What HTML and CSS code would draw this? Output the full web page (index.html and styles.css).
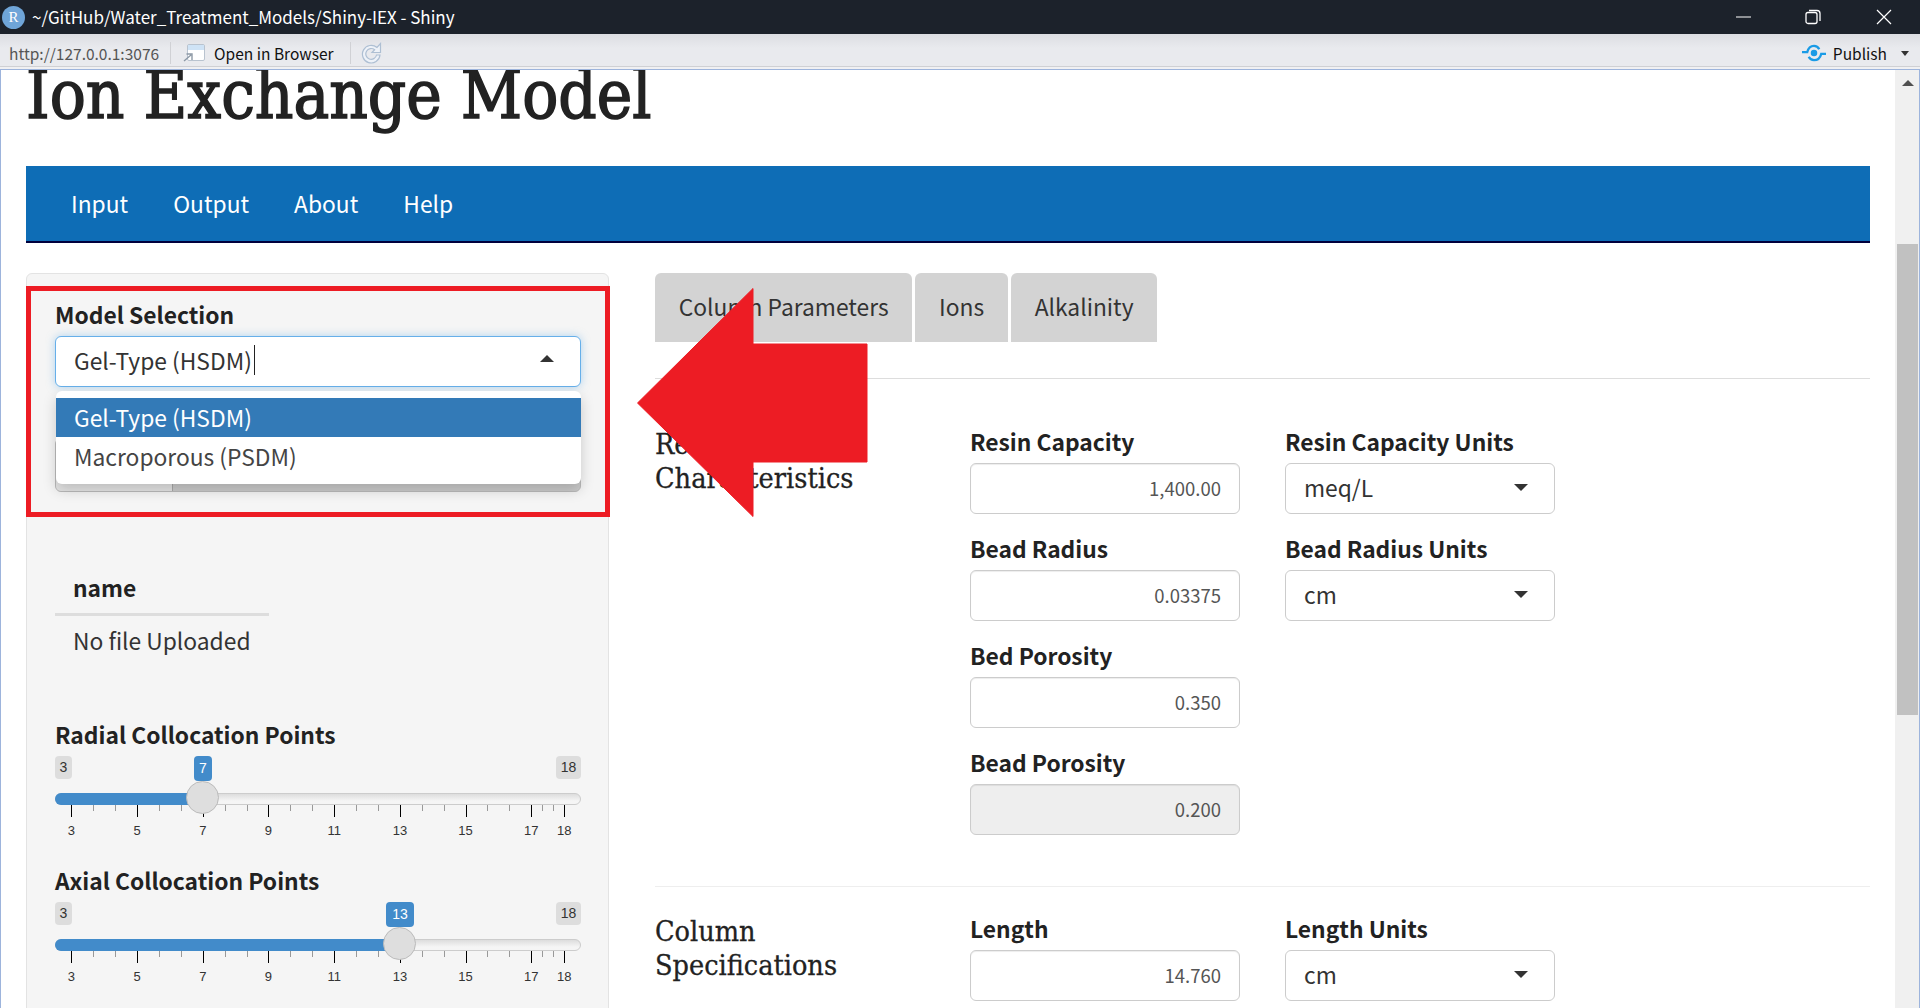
FILE: index.html
```html
<!DOCTYPE html>
<html lang="en">
<head>
<meta charset="utf-8">
<title>Shiny-IEX</title>
<link rel="stylesheet" href="styles.css">
</head>
<body>
<header class="titlebar">
  <span class="r-logo">R</span>
  <span class="title-text">~/GitHub/Water_Treatment_Models/Shiny-IEX - Shiny</span>
  <div class="win-btns">
    <svg class="win-icon" viewBox="0 0 16 16"><path d="M0 8h15" stroke="#fff" fill="none"/></svg>
    <svg class="win-icon" viewBox="0 0 16 16"><rect x="1" y="3.500" width="11" height="11" rx="2" stroke="#fff" fill="none" stroke-width="1.300"/><path d="M4 1.500h8a3 3 0 0 1 3 3v7.500" stroke="#fff" fill="none" stroke-width="1.300"/></svg>
    <svg class="win-icon" viewBox="0 0 16 16"><path d="M1 1l14 14M15 1L1 15" stroke="#fff" fill="none" stroke-width="1.200"/></svg>
  </div>
</header>
<div class="toolbar">
  <span class="url">http://127.0.0.1:3076</span>
  <span class="tool-sep"></span>
  <svg class="open-icon" viewBox="0 0 22 20"><rect x="4.500" y="1.500" width="17" height="16" rx="1.500" fill="#fff" stroke="#b9c3cf"/><rect x="5" y="2" width="16" height="5" fill="#cfe3f6"/><path d="M1 18l7-6M3.500 11H9v6" stroke="#8d99a6" fill="none" stroke-width="1.400"/></svg>
  <span class="open-text">Open in Browser</span>
  <span class="tool-sep sep-reload"></span>
  <svg class="reload-icon" viewBox="0 0 22 22"><path d="M17 5.500A8.800 8.800 0 1 0 20 13h-3.500a5.400 5.400 0 1 1-1.900-5.300L12 10.500h8.500V1.500z" fill="#eef2f8" stroke="#aebfd3" stroke-width="1.200"/></svg>
  <div class="publish">
    <svg class="publish-icon" viewBox="0 0 25 20"><circle cx="12.500" cy="10" r="3.400" fill="#1a9be6"/><path d="M0 9h5.500C6.500 5 9 2.500 12.500 2.500S17 4 18 6M25 11h-5c-1 4-4 6.500-7.500 6.500S8 16 7 14" fill="none" stroke="#1a9be6" stroke-width="2.400"/></svg>
    <span>Publish</span>
    <span class="caret-small"></span>
  </div>
</div>
<div class="viewport">
  <main class="page">
    <h1 class="app-title">Ion Exchange Model</h1>
    <nav class="navbar">
      <a>Input</a><a>Output</a><a>About</a><a>Help</a>
    </nav>
    <div class="layout">
      <aside class="sidebar">
        <div class="model-field">
          <label class="lbl">Model Selection</label>
          <div class="select">
            <span>Gel-Type (HSDM)</span><i class="cursor"></i>
            <span class="caret-up"></span>
          </div>
          <div class="under-dropdown"><span class="browse-stub"></span></div>
          <ul class="menu">
            <li class="active">Gel-Type (HSDM)</li>
            <li>Macroporous (PSDM)</li>
          </ul>
        </div>
        <table class="file-table">
          <thead><tr><th>name</th></tr></thead>
          <tbody><tr><td>No file Uploaded</td></tr></tbody>
        </table>
        <div class="slider radial">
          <label class="lbl">Radial Collocation Points</label>
          <div class="track-area">
            <span class="badge badge-min">3</span>
            <span class="badge badge-max">18</span>
            <span class="badge badge-val val-7">7</span>
            <div class="track"><div class="fill fill-7"></div></div>
            <div class="ticks"></div>
            <span class="knob knob-7"></span>
          </div>
        </div>
        <div class="slider">
          <label class="lbl">Axial Collocation Points</label>
          <div class="track-area">
            <span class="badge badge-min">3</span>
            <span class="badge badge-max">18</span>
            <span class="badge badge-val val-13">13</span>
            <div class="track"><div class="fill fill-13"></div></div>
            <div class="ticks"></div>
            <span class="knob knob-13"></span>
          </div>
        </div>
      </aside>
      <section class="content">
        <div class="tabs">
          <span class="tab">Column Parameters</span><span class="tab">Ions</span><span class="tab">Alkalinity</span>
        </div>
        <div class="row first-row">
          <h3 class="row-title">Resin<br>Characteristics</h3>
          <div class="grid">
            <div class="field"><label class="lbl">Resin Capacity</label><div class="num">1,400.00</div></div>
            <div class="field"><label class="lbl">Resin Capacity Units</label><div class="sel">meq/L<span class="caret-down"></span></div></div>
            <div class="field"><label class="lbl">Bead Radius</label><div class="num">0.03375</div></div>
            <div class="field"><label class="lbl">Bead Radius Units</label><div class="sel">cm<span class="caret-down"></span></div></div>
            <div class="field span"><label class="lbl">Bed Porosity</label><div class="num">0.350</div></div>
            <div class="field span"><label class="lbl">Bead Porosity</label><div class="num disabled">0.200</div></div>
          </div>
        </div>
        <div class="row second-row">
          <h3 class="row-title">Column<br>Specifications</h3>
          <div class="grid">
            <div class="field"><label class="lbl">Length</label><div class="num">14.760</div></div>
            <div class="field"><label class="lbl">Length Units</label><div class="sel">cm<span class="caret-down"></span></div></div>
          </div>
        </div>
      </section>
    </div>
    <div class="highlight"></div>
    <svg class="arrow" viewBox="0 0 232 231"><path d="M1.500 116L117 1.500V57H231V175H117V229.500z" fill="#ed1c24" stroke="#ed1c24" stroke-linejoin="round"/></svg>
  </main>
  <div class="scrollbar">
    <span class="scroll-up"></span>
    <span class="scroll-thumb"></span>
  </div>
</div>
<script src="ticks.js"></script>
</body>
</html>
```
FILE: ticks.js
```js
document.querySelectorAll('.ticks').forEach(function (box) {
  var unit = 32.85;
  function add(cls, value) {
    var el = document.createElement('i');
    el.className = cls;
    el.style.left = (value * unit).toFixed(1) + 'px';
    box.appendChild(el);
    return el;
  }
  for (var n = 0; n < 14; n += 2 / 3) {
    var whole = Math.abs(n / 2 - Math.round(n / 2)) < 0.01;
    add(whole ? 'tick major' : 'tick', n);
  }
  add('tick major', 14);
  add('tick', 14 + 1 / 3);
  add('tick', 14 + 2 / 3);
  add('tick major', 15);
  [3, 5, 7, 9, 11, 13, 15, 17, 18].forEach(function (label) {
    add('tick-label', label - 3).textContent = label;
  });
});
```
FILE: styles.css
```css
* { box-sizing: border-box; }
html, body { margin: 0; padding: 0; height: 1008px; overflow: hidden; background: #fff; }
body { font-family: "Noto Sans CJK SC", "Noto Sans", sans-serif; color: #222; }

.titlebar { height: 34px; background: #1c222b; display: flex; align-items: center; color: #fff; }
.r-logo { width: 23px; height: 23px; margin-left: 2px; border-radius: 50%; background: #6fa5d8; color: #fff; font: 15px/23px "Liberation Serif", serif; text-align: center; }
.title-text { margin-left: 7px; font-size: 17px; padding-bottom: 2px; }
.win-btns { margin-left: auto; display: flex; margin-right: 28px; align-items: center; }
.win-icon { width: 16px; height: 16px; display: block; margin-left: 53px; }
.win-icon:last-child { margin-left: 55px; }

.toolbar { height: 35px; padding-top: 3px; background: linear-gradient(#dcdde2, #e9eaee 40%, #e9eaee 91%, #cfd0d4 91%, #cfd0d4 94%, #f0f0f2 94%); display: flex; align-items: center; font-size: 15.500px; color: #111; }
.url { margin-left: 9px; color: #555; font-size: 15.500px; }
.tool-sep { width: 1px; height: 22px; background: #d0d1d5; margin-left: 11px; }
.sep-reload { margin-left: 16px; }
.open-icon { width: 22px; height: 20px; margin-left: 12px; }
.open-text { margin-left: 9px; }
.reload-icon { width: 22px; height: 22px; margin-left: 9px; }
.publish { margin-left: auto; display: flex; align-items: center; color: #111; margin-right: 11px; }
.publish-icon { width: 24px; height: 20px; margin-right: 7px; }
.caret-small { margin-left: 14px; border: solid transparent; border-width: 5px 4px 0; border-top-color: #333; }

.viewport { height: 939px; border: 1px solid #9db4dc; border-bottom: 0; display: flex; overflow: hidden; }
.page { flex: 1; position: relative; padding: 0 25px; min-width: 0; }
.app-title { margin: 0; height: 96px; padding-top: 3px; font: 400 66.700px/44px "DejaVu Serif Condensed", "Liberation Serif", serif; color: #222; -webkit-text-stroke: 1.500px #222; white-space: nowrap; }

.navbar { height: 77px; background: #0e6db6; border-bottom: 2px solid #00003c; display: flex; align-items: center; padding-left: 45px; gap: 45px; }
.navbar a { color: #fff; font-size: 22.800px; line-height: 1; margin-top: 1px; }

.layout { display: flex; margin-top: 30px; align-items: flex-start; }
.sidebar { width: 583px; height: 900px; flex: none; background: #f5f5f5; border: 1px solid #e3e3e3; border-radius: 6px; padding: 24px 27px 24px 28px; }
.lbl { display: block; font-weight: 700; font-size: 22.800px; line-height: 34px; height: 34px; color: #222; }

.model-field { position: relative; height: 206px; }
.select { height: 51px; margin-top: 4px; padding-bottom: 3px; background: #fff; border: 1px solid #66afe9; border-radius: 6px; box-shadow: 0 0 8px rgba(102,175,233,.5); padding-left: 18px; display: flex; align-items: center; font-size: 22.800px; color: #333; position: relative; }
.cursor { width: 1px; height: 30px; background: #222; margin-left: 2px; }
.caret-up { position: absolute; right: 26px; top: 18px; border: solid transparent; border-width: 0 7px 7px; border-bottom-color: #333; }
.under-dropdown { position: absolute; left: 0; right: 0; top: 140px; height: 54px; border-radius: 6px; background: #ccc; border: 1px solid #bbb; overflow: hidden; }
.browse-stub { display: block; width: 117px; height: 100%; background: #e6e6e6; border-right: 1px solid #aaa; }
.menu { position: absolute; left: 1px; right: 0; top: 93px; margin: 0; padding: 7px 0 0; height: 93px; list-style: none; background: #fff; border-radius: 6px; box-shadow: 0 6px 14px rgba(0,0,0,.18); font-size: 22.800px; color: #444; overflow: hidden; }
.menu li { height: 39px; line-height: 40px; padding-left: 18px; }
.menu li.active { background: #337ab7; color: #fff; }

.file-table { border-collapse: collapse; margin-top: 58px; font-size: 22.800px; width: 214px; table-layout: fixed; }
.file-table th { text-align: left; padding: 0 0 0 18px; font-weight: 700; height: 52px; border-bottom: 3px solid #ddd; }
.file-table td { padding: 0 0 0 18px; height: 52px; color: #333; white-space: nowrap; }

.slider { height: 145.500px; }
.slider.radial { margin-top: 52px; }
.track-area { position: relative; height: 100px; }
.badge { position: absolute; top: 4px; height: 23px; border-radius: 4px; background: #ddd; color: #333; font: 14px/23px "Liberation Sans", sans-serif; text-align: center; }
.badge-min { left: 0; width: 17px; }
.badge-max { right: 0; width: 25px; }
.badge-val { background: #428bca; color: #fff; height: 25px; line-height: 25px; }
.val-7 { left: 139px; width: 18px; }
.val-13 { left: 331px; width: 28px; }
.track { position: absolute; top: 41px; left: 0; right: 0; height: 12px; background: linear-gradient(#ddd, #f5f5f5 70%); border: 1px solid #ccc; border-radius: 6px; }
.fill { position: absolute; left: -1px; top: -1px; bottom: -1px; background: #428bca; border-radius: 6px 0 0 6px; }
.fill-7 { width: 140px; }
.fill-13 { width: 335px; }
.knob { position: absolute; top: 29px; width: 33px; height: 33px; background: #dedede; border: 1px solid #bbb; border-radius: 50%; }
.knob-7 { left: 131px; }
.knob-13 { left: 328px; }
.ticks { position: absolute; left: 16.400px; top: 53px; width: 500px; height: 44px; }
.tick { position: absolute; top: 0; width: 1px; height: 6px; background: #999; }
.tick.major { height: 12px; background: #000; }
.tick-label { position: absolute; top: 18px; transform: translateX(-50%); font: normal 13px/16px "Liberation Sans", sans-serif; color: #333; }

.content { flex: 1; margin-left: 46px; min-width: 0; }
.tabs { display: flex; gap: 3px; height: 69px; }
.tab { height: 69px; padding: 0 23.750px 2px; display: flex; align-items: center; background: #d3d3d3; border-radius: 6px 6px 0 0; font-size: 22.800px; color: #333; }
.row { display: flex; }
.first-row { border-top: 1px solid #ddd; margin-top: 36px; padding-top: 46px; height: 508px; }
.second-row { border-top: 1px solid #eee; padding-top: 25px; }
.row-title { width: 315px; flex: none; margin: 3px 0 0; font: 400 28.500px/34px "DejaVu Serif Condensed", "Liberation Serif", serif; color: #222; -webkit-text-stroke: 0.3px #222; }
.grid { display: grid; grid-template-columns: 270px 270px; column-gap: 45px; align-content: start; }
.field.span { grid-column: 1; }
.grid .lbl { height: 34px; line-height: 34px; margin-bottom: 4px; }
.grid .field { height: 107px; }
.num { height: 51px; border: 1px solid #ccc; border-radius: 6px; background: #fff; box-shadow: inset 0 1px 1px rgba(0,0,0,.075); text-align: right; padding-right: 18px; font-size: 18.500px; line-height: 49px; color: #555; }
.num.disabled { background: #eee; }
.sel { height: 51px; border: 1px solid #ccc; border-radius: 6px; background: #fff; padding-left: 18px; font-size: 22.800px; line-height: 48px; color: #333; position: relative; }
.caret-down { position: absolute; right: 26px; top: 20px; border: solid transparent; border-width: 7px 7px 0; border-top-color: #333; }

.highlight { position: absolute; left: 25px; top: 216px; width: 584px; height: 231px; border: 5px solid #ed1c24; pointer-events: none; }
.arrow { position: absolute; left: 635px; top: 217px; width: 232px; height: 231px; }

.scrollbar { width: 24px; flex: none; background: #f0f0f0; position: relative; }
.scroll-up { position: absolute; left: 7px; top: 10px; border: solid transparent; border-width: 0 6px 6px; border-bottom-color: #505050; }
.scroll-thumb { position: absolute; left: 2px; top: 174px; width: 21px; height: 471px; background: #c1c1c1; }
```
